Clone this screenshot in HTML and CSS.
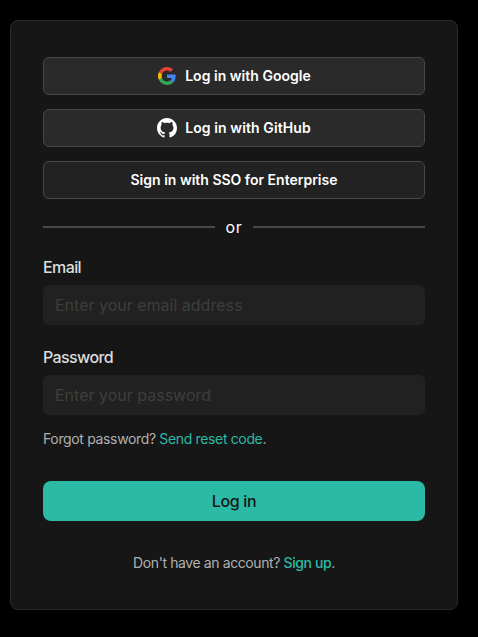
FILE: index.html
```
<!DOCTYPE html>
<html lang="en">
<head>
    <meta charset="UTF-8">
    <meta name="viewport" content="width=device-width, initial-scale=1.0">
    <title>Log in</title>
    <link rel="stylesheet" href="styles.css">
</head>
<body>
    <main class="card">
        <div class="providers">
            <button type="button" class="provider">
                <svg class="google" viewBox="0 0 48 48">
                    <path fill="#EA4335" d="M24 9.5c3.54 0 6.71 1.22 9.21 3.6l6.85-6.85C35.9 2.38 30.47 0 24 0 14.62 0 6.51 5.38 2.56 13.22l7.98 6.19C12.43 13.72 17.74 9.5 24 9.5z"/>
                    <path fill="#4285F4" d="M46.98 24.55c0-1.57-.15-3.09-.38-4.55H24v9.02h12.94c-.58 2.96-2.26 5.48-4.78 7.18l7.73 6c4.51-4.18 7.09-10.36 7.09-17.65z"/>
                    <path fill="#FBBC05" d="M10.53 28.59c-.48-1.45-.76-2.99-.76-4.59s.27-3.14.76-4.59l-7.98-6.19C.92 16.46 0 20.12 0 24c0 3.88.92 7.54 2.56 10.78l7.97-6.19z"/>
                    <path fill="#34A853" d="M24 48c6.48 0 11.93-2.13 15.89-5.81l-7.73-6c-2.15 1.45-4.92 2.3-8.16 2.3-6.26 0-11.57-4.22-13.47-9.91l-7.98 6.19C6.51 42.62 14.62 48 24 48z"/>
                </svg>
                <span>Log in with Google</span>
            </button>
            <button type="button" class="provider">
                <svg class="github" viewBox="0 0 16 16">
                    <path fill="#fff" d="M8 0C3.58 0 0 3.58 0 8c0 3.54 2.29 6.53 5.47 7.59.4.07.55-.17.55-.38 0-.19-.01-.82-.01-1.49-2.01.37-2.53-.49-2.69-.94-.09-.23-.48-.94-.82-1.13-.28-.15-.68-.52-.01-.53.63-.01 1.08.58 1.23.82.72 1.21 1.87.87 2.33.66.07-.52.28-.87.51-1.07-1.78-.2-3.64-.89-3.64-3.95 0-.87.31-1.59.82-2.15-.08-.2-.36-1.02.08-2.12 0 0 .67-.21 2.2.82.64-.18 1.32-.27 2-.27s1.36.09 2 .27c1.53-1.04 2.2-.82 2.2-.82.44 1.1.16 1.92.08 2.12.51.56.82 1.27.82 2.15 0 3.07-1.87 3.75-3.65 3.95.29.25.54.73.54 1.48 0 1.07-.01 1.93-.01 2.2 0 .21.15.46.55.38A8.01 8.01 0 0 0 16 8c0-4.42-3.58-8-8-8z"/>
                </svg>
                <span class="wide">Log in with GitHub</span>
            </button>
            <button type="button" class="provider sso"><span>Sign in with SSO for Enterprise</span></button>
        </div>

        <div class="divider">or</div>

        <form>
            <label for="email">Email</label>
            <input type="email" id="email" placeholder="Enter your email address">
            <label for="password">Password</label>
            <input type="password" id="password" placeholder="Enter your password">
            <p class="forgot">Forgot password? <a href="#">Send reset code</a>.</p>
            <button type="submit" class="submit">Log in</button>
        </form>

        <p class="signup">Don't have an account? <a href="#">Sign up</a>.</p>
    </main>
</body>
</html>
```
FILE: styles.css
```
* {
    box-sizing: border-box;
}

body {
    margin: 0;
    padding: 20px 20px 27px 10px;
    background-color: #000;
    color: #fff;
    font-family: Inter, "Liberation Sans", sans-serif;
    font-size: 16px;
}

button, input {
    font-family: inherit;
}

button {
    cursor: pointer;
}

.card {
    height: 590px;
    padding: 36px 32px;
    background-color: #161616;
    border: 1px solid #2a2a2a;
    border-radius: 8px;
}

.providers {
    display: flex;
    flex-direction: column;
    gap: 14px;
}

.provider {
    display: flex;
    align-items: center;
    justify-content: center;
    gap: 8px;
    height: 38px;
    padding: 0;
    background-color: #2a2a2a;
    border: 1px solid #484848;
    border-radius: 6px;
    color: #fff;
    font-size: 14px;
    font-weight: 600;
    letter-spacing: 0.03px;
}

.provider span {
    padding-bottom: 1px;
}

.provider .wide {
    letter-spacing: 0.1px;
}

.sso {
    background-color: #222;
    letter-spacing: 0;
}

.google {
    width: 18px;
    height: 18px;
    margin: 1px;
}

.github {
    width: 20px;
    height: 20px;
}

.divider {
    display: flex;
    align-items: center;
    gap: 10.5px;
    height: 24px;
    margin: 16px 0;
    letter-spacing: 0.6px;
}

.divider::before,
.divider::after {
    content: "";
    flex: 1;
    height: 2px;
    background-color: #484848;
}

label {
    display: block;
    height: 24px;
    margin-bottom: 6px;
    color: #ddd;
    font-weight: 500;
    line-height: 24px;
    letter-spacing: -0.6px;
}

input {
    display: block;
    width: 100%;
    height: 40px;
    margin-bottom: 20px;
    padding: 0 12px;
    background-color: #212121;
    border: none;
    border-radius: 6px;
    color: #fff;
    font-size: 16px;
}

input::placeholder {
    color: #3e3e3e;
}

.forgot, .signup {
    margin: 0;
    color: #b0b0b0;
    font-size: 14px;
    line-height: 20px;
    letter-spacing: -0.35px;
}

.forgot {
    margin-top: -6px;
}

a {
    color: #2bbaa5;
    text-decoration: none;
}

.submit {
    width: 100%;
    height: 40px;
    margin-top: 32px;
    background-color: #2bbaa5;
    border: none;
    border-radius: 8px;
    color: #161616;
    font-size: 16px;
    font-weight: 500;
    letter-spacing: -0.35px;
}

.signup {
    margin-top: 32px;
    text-align: center;
    letter-spacing: -0.4px;
}

.signup a {
    font-weight: 500;
}
```
